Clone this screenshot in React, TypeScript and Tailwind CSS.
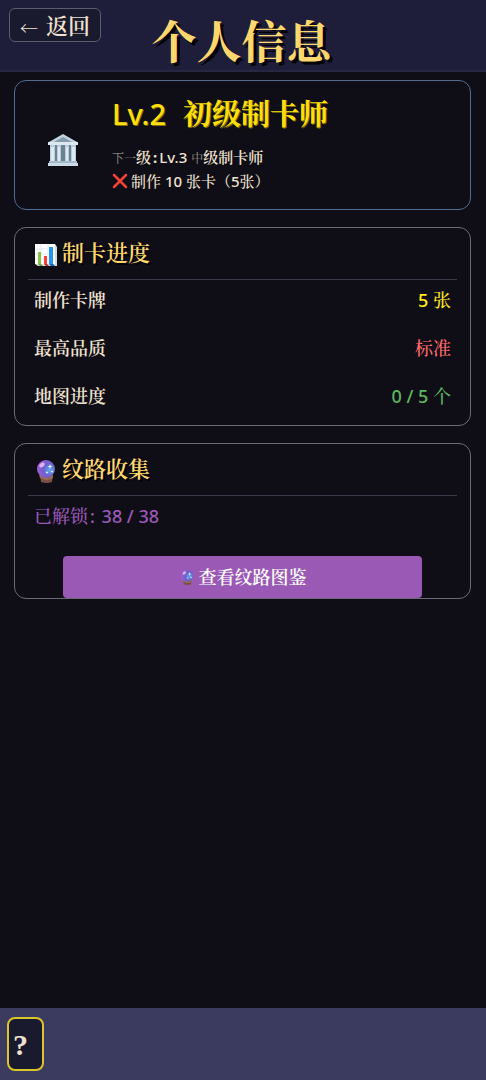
import type { ReactNode } from 'react'

const STATS = [
  { label: '制作卡牌', value: '5 张', color: 'text-[#ffe81c]' },
  { label: '最高品质', value: '标准', color: 'text-[#ff6b6b]' },
  { label: '地图进度', value: '0 / 5 个', color: 'text-[#5cb85c]' },
]

function TempleIcon() {
  return (
    <svg viewBox="0 0 32 32" className="h-8 w-8 shrink-0" aria-hidden="true">
      <path d="M16 0 30 8v3H2V8z" fill="#c3d3df" />
      <path d="M16 3 25 8H7z" fill="#839bab" />
      <path d="M1 8h30v3H1z" fill="#dce7ef" />
      <path d="M3 11h26v17H3z" fill="#6a8291" />
      <path d="M3 11h5v17H3zM10 11h4v17h-4zM18 11h4v17h-4zM24 11h5v17h-5z" fill="#b9ccd9" />
      <path d="M4 13h3v14H4zM11 13h2v14h-2zM19 13h2v14h-2zM25 13h3v14h-3z" fill="#deeaf3" />
      <path d="M2 27h28v3H2z" fill="#a5b9c8" />
      <path d="M1 29h30v3H1z" fill="#cadae6" />
    </svg>
  )
}

function ChartIcon() {
  return (
    <svg viewBox="0 0 24 24" className="h-6 w-6 shrink-0" aria-hidden="true">
      <path d="M1 1h20l2 3v19H4l-3-2z" fill="#d5dde0" />
      <path d="M1 1h20v20H1z" fill="#fff" />
      <path d="M1 6h20M1 11h20M1 16h20M7 1v20M14 1v20" stroke="#e4ebee" strokeWidth="1" />
      <path d="M4 9h3v12H4z" fill="#8bc34a" />
      <path d="M10 13h3v8h-3z" fill="#f44336" />
      <path d="M15 4h4v17h-4z" fill="#2196f3" />
      <path d="m4 21 2 2h3l-2-2z" fill="#689f38" />
      <path d="m10 21 2 2h3l-2-2z" fill="#c62828" />
      <path d="m15 21 2 2h4l-2-2z" fill="#1565c0" />
    </svg>
  )
}

function CrystalBall({ className }: { className: string }) {
  return (
    <svg viewBox="0 0 24 24" className={className} aria-hidden="true">
      <defs>
        <radialGradient id="orb" cx="0.7" cy="0.55" r="0.7">
          <stop offset="0" stopColor="#5fa8f0" />
          <stop offset="0.5" stopColor="#6b60cc" />
          <stop offset="1" stopColor="#a45fd2" />
        </radialGradient>
      </defs>
      <path d="M6 16h13l-1 7q-5 2-11 0z" fill="#795046" />
      <path d="M5 16q7 6 14 0v3q-6 4-13 0z" fill="#9a6b4f" />
      <circle cx="12" cy="10" r="9" fill="url(#orb)" />
      <ellipse cx="8" cy="6" rx="3" ry="2" fill="#e0aef5" transform="rotate(-40 8 6)" />
      <path d="m16 5 .6 1.8 1.8.7-1.8.7L16 10l-.6-1.8-1.8-.7 1.8-.7zM18 11l.5 1 1 .5-1 .5-.5 1-.5-1-1-.5 1-.5zM13 12l.5 1 1 .5-1 .5-.5 1-.5-1-1-.5 1-.5z" fill="#e1f5fe" />
    </svg>
  )
}

function CrossIcon() {
  return (
    <svg viewBox="0 0 16 16" className="h-4 w-4 shrink-0" aria-hidden="true">
      <path d="m2 2 12 12M14 2 2 14" stroke="#f44336" strokeWidth="2.5" strokeLinecap="round" />
    </svg>
  )
}

function Panel({ icon, title, children }: { icon: ReactNode; title: string; children: ReactNode }) {
  return (
    <section className="rounded-xl border border-[#6a6a78]">
      <h2 className="mx-[13px] flex h-[52px] items-center gap-1 border-b border-[#3a3a48] px-1.5 text-[22px] font-semibold text-[#ffd76e] [text-shadow:2px_2px_0_#000]">
        <span className="pt-0.5">{icon}</span>
        <span className="pb-0.5">{title}</span>
      </h2>
      {children}
    </section>
  )
}

export default function App() {
  return (
    <div className="flex min-h-screen flex-col bg-[#0f0e17] font-['Noto_Sans','Noto_Serif_CJK_SC','Noto_Sans_CJK_SC',sans-serif] font-medium text-[#f0e2d0]">
      <header className="grid h-[72px] grid-cols-[1fr_auto_1fr] items-start border-b-2 border-[#292641] bg-[#1f1e3a] pr-3 pl-[9px]">
        <button className="mt-2 flex h-[34px] w-[92px] items-center justify-center gap-2 rounded-md border border-[#5d5c6c] bg-[#1a1a2e] text-[22px] font-semibold">
          <span className="pt-1.5 text-lg font-medium">←</span>
          返回
        </button>
        <h1 className="text-[45px] leading-[84px] font-bold text-[#ffd76e] [text-shadow:3px_3px_0_#000]">
          个人信息
        </h1>
      </header>

      <main className="flex flex-1 flex-col gap-[17px] py-2 pr-[15px] pl-3.5">
        <section className="flex h-[130px] items-start rounded-xl border border-[#4f6d92] pl-8">
          <div className="mt-[53px] mr-[33px]">
            <TempleIcon />
          </div>
          <div className="pt-[13px]">
            <h2 className="flex gap-[17px] text-[29px] leading-10 font-bold text-[#ffde0a] [text-shadow:1px_1px_0_#806f05]">
              <span className="font-medium">Lv.2</span>
              <span>初级制卡师</span>
            </h2>
            <p className="mt-[11px] text-[15px] leading-6">
              <span className="text-xs font-light text-[#b0a89e]">下一</span>
              <span className="font-semibold">级</span>
              <span className="px-0.5 font-bold">:</span>Lv.3{' '}
              <span className="text-xs font-light text-[#b0a89e]">中</span>
              <span className="font-semibold">级制卡师</span>
            </p>
            <p className="flex items-center gap-[3px] text-[15px] leading-6">
              <CrossIcon />
              制作 10 张卡（5张）
            </p>
          </div>
        </section>

        <Panel icon={<ChartIcon />} title="制卡进度">
          <dl className="px-[19px] pb-px">
            {STATS.map((s) => (
              <div key={s.label} className="flex h-12 items-start justify-between pt-1.5 text-lg">
                <dt className="font-semibold">{s.label}</dt>
                <dd className={s.color}>{s.value}</dd>
              </div>
            ))}
          </dl>
        </Panel>

        <Panel icon={<CrystalBall className="h-6 w-6 shrink-0" />} title="纹路收集">
          <p className="px-[19px] pt-1.5 text-lg text-[#9b59b6]">
            已解锁<span className="px-0.5">:</span> 38 / 38
          </p>
          <button className="mx-12 mt-[26px] flex h-[42px] w-[calc(100%-96px)] items-center justify-center gap-1 rounded bg-[#9b59b6] text-lg font-semibold text-white">
            <CrystalBall className="h-4 w-4 shrink-0" />
            查看纹路图鉴
          </button>
        </Panel>
      </main>

      <footer className="flex h-[72px] items-center bg-[#3b3a5f] px-[7px]">
        <button
          aria-label="帮助"
          className="h-[54px] w-[37px] rounded-lg border-2 border-[#d9c62a] bg-[#1a1a2e] pl-1 text-left font-['Liberation_Serif',serif] text-[30px] font-bold"
        >
          ?
        </button>
      </footer>
    </div>
  )
}
